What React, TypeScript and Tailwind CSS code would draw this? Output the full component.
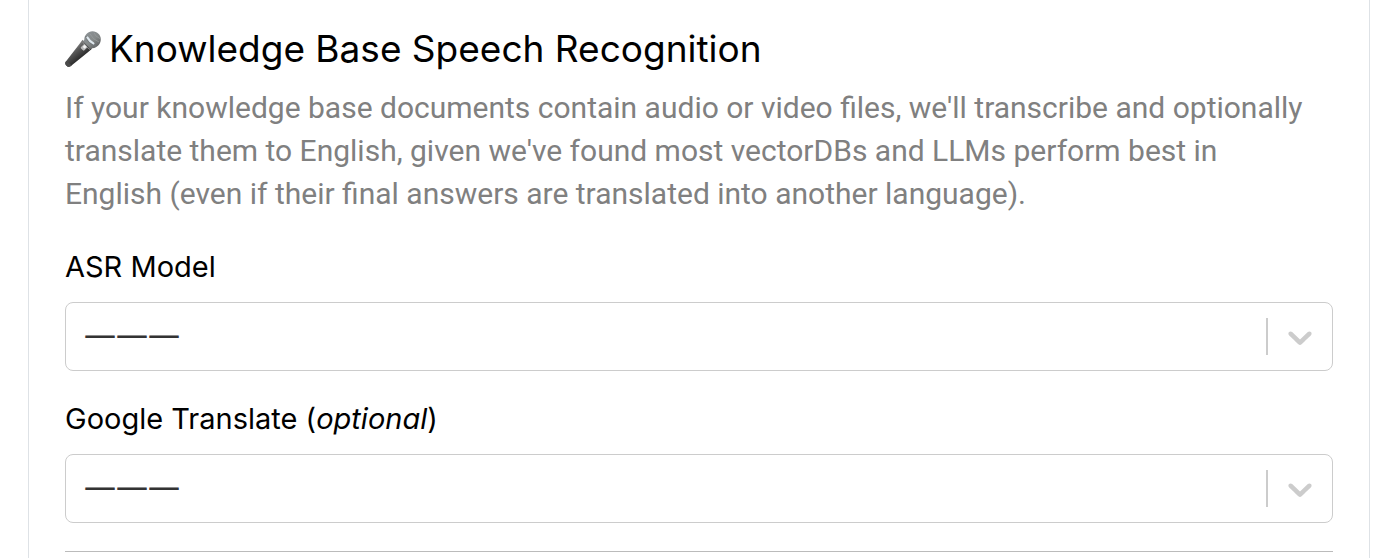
import { useId, type ReactNode } from "react";

function Microphone() {
  return (
    <svg viewBox="0 0 36 36" className="h-9 w-9 shrink-0" aria-hidden="true">
      <defs>
        <linearGradient id="mic-body" x1="8" y1="16" x2="16" y2="26" gradientUnits="userSpaceOnUse">
          <stop offset="0" stopColor="#8a8a8a" />
          <stop offset="0.35" stopColor="#5c5c5c" />
          <stop offset="1" stopColor="#303030" />
        </linearGradient>
        <linearGradient id="mic-head" x1="22" y1="2" x2="34" y2="16" gradientUnits="userSpaceOnUse">
          <stop offset="0" stopColor="#8b9093" />
          <stop offset="0.5" stopColor="#858989" />
          <stop offset="1" stopColor="#5b5d5e" />
        </linearGradient>
      </defs>
      <path d="M17.5 8.8 27 17.8 22.6 21.6 6.2 34.8Q4.4 36.4 2.4 35.4L.8 33.9Q-.3 32.4.7 30.8L14.6 12.8Z" fill="url(#mic-body)" />
      <path d="M.7 30.8Q-.3 32.4.8 33.9L2.4 35.4Q4.4 36.4 6.2 34.8L6.8 34.2 1.4 30Z" fill="#4a4a4a" />
      <path d="M19.3 8.5C19.4 4 23 .3 27.4.3 32.4.3 35.8 4 35.8 8.2 35.8 12.8 32.6 16.6 27.4 17.2L25.4 18 18.4 10.4Z" fill="url(#mic-head)" />
      <path d="M21.2 5.2Q23.3 11.5 31 15" fill="none" stroke="#707577" strokeWidth="2.2" />
      <path d="M22.4 6.5Q24.4 10.2 28.4 12.4" fill="none" stroke="#dfe8ee" strokeWidth="2.2" strokeLinecap="round" />
      <path d="M25 2.8Q27.5 8.5 34 11M29 1.8Q30.5 6 35 7.5" fill="none" stroke="#9a9e9f" strokeWidth=".7" />
      <path d="M17.6 11Q20.5 16 25 18.5" fill="none" stroke="#8a8a8a" strokeWidth="1" />
      <rect x="-2.8" y="-2.4" width="5.6" height="4.8" rx="1" transform="translate(19 16.4) rotate(-45)" fill="#b9b9b9" />
      <rect x="-1.4" y="-1.4" width="2.8" height="2.8" rx=".6" transform="translate(19.6 15.8) rotate(-45)" fill="#f4f4f4" />
    </svg>
  );
}

function SelectField({ label }: { label: ReactNode }) {
  const id = useId();
  return (
    <div>
      <label htmlFor={id} className="block font-['Inter','Liberation_Sans',sans-serif] text-[29px] leading-10 text-black">
        {label}
      </label>
      <div className="relative mt-[15px]">
        <select
          id={id}
          className="block h-[69px] w-full appearance-none rounded-lg border border-[#cccccc] bg-white pr-20 pb-1.5 pl-[18px] font-['Open_Sans','Noto_Sans',sans-serif] text-[32px] text-[#333333]"
        >
          <option>———</option>
        </select>
        <div className="pointer-events-none absolute inset-y-4 right-[13px] flex items-center gap-3 text-[#cccccc]">
          <span className="h-full w-0.5 bg-[#cccccc]" />
          <svg viewBox="0 0 20 20" className="h-10 w-10" fill="currentColor" aria-hidden="true">
            <path d="M4.516 7.548c0.436-0.446 1.043-0.481 1.576 0l3.908 3.747 3.908-3.747c0.533-0.481 1.141-0.446 1.574 0 0.436 0.445 0.408 1.197 0 1.615-0.406 0.418-4.695 4.502-4.695 4.502-0.217 0.223-0.502 0.335-0.787 0.335s-0.57-0.112-0.789-0.335c0 0-4.287-4.084-4.695-4.502s-0.436-1.17 0-1.615z" />
          </svg>
        </div>
      </div>
    </div>
  );
}

export default function App() {
  return (
    <main className="bg-white pr-6 pl-7">
      <section className="border-x border-[#dee2e6] px-9 pt-7 pb-1.5">
        <h2 className="flex items-center gap-2 font-['Inter','Liberation_Sans',sans-serif] text-[37px] leading-[42px] font-normal text-black">
          <Microphone />
          Knowledge Base Speech Recognition
        </h2>
        <p className="mt-4 pr-4 font-['Roboto','Liberation_Sans',sans-serif] text-[30px] leading-[43px] text-[#808080]">
          If your knowledge base documents contain audio or video files, we'll transcribe and optionally translate them
          to English, given we've found most vectorDBs and LLMs perform best in English (even if their final answers are
          translated into another language).
        </p>
        <div className="mt-8 flex flex-col gap-7">
          <SelectField label="ASR Model" />
          <SelectField
            label={
              <>
                Google Translate (<em>optional</em>)
              </>
            }
          />
          <hr className="border-[#bbbbbb]" />
        </div>
      </section>
    </main>
  );
}
